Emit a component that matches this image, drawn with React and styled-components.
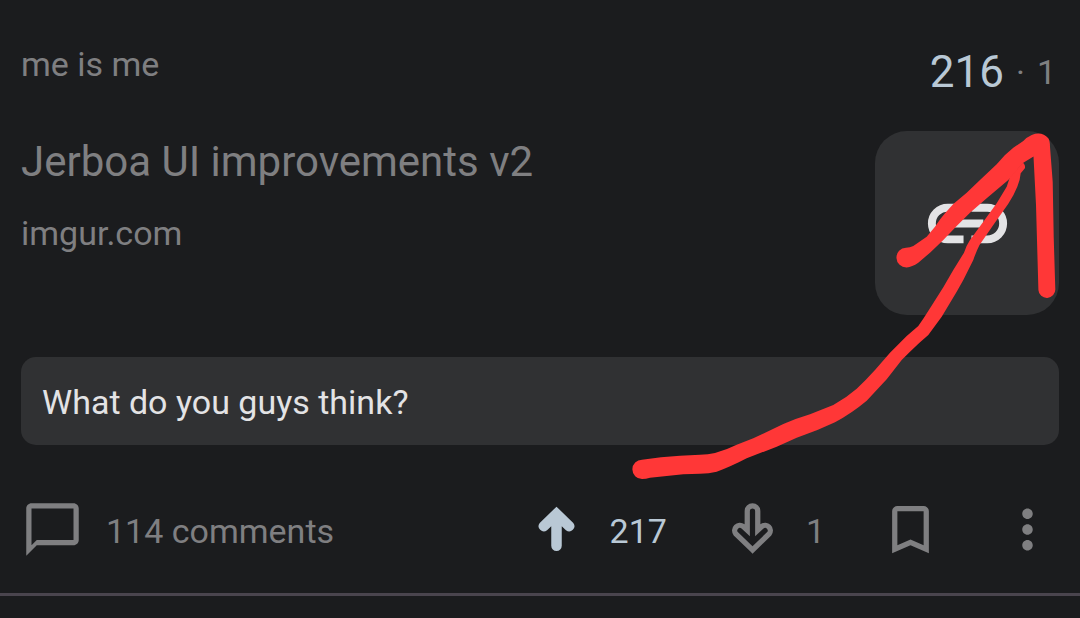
import React from "react";
import styled, { createGlobalStyle } from "styled-components";

const color = {
  page: "#1b1c1e",
  surface: "#303133",
  muted: "#7f7f81",
  text: "#e3e3e5",
  accent: "#b9c8d5",
  divider: "#4a454e",
  marker: "#ff3737",
};

const GlobalStyle = createGlobalStyle`
  *, *::before, *::after { box-sizing: border-box; }
  body {
    margin: 0;
    background: ${color.page};
    color: ${color.muted};
    font-family: Roboto, "Liberation Sans", sans-serif;
    font-size: 34px;
    line-height: 40px;
  }
`;

const Post = styled.article`
  position: relative;
  padding: 44px 21px 32px;
  border-bottom: 3px solid ${color.divider};
`;

const Header = styled.header`
  display: flex;
  justify-content: space-between;
  align-items: flex-start;
`;

const Score = styled.div`
  display: flex;
  align-items: center;
  gap: 12px;
  padding-right: 3px;
  line-height: 56px;
`;

const Total = styled.span`
  font-size: 44px;
  color: ${color.accent};
`;

const Main = styled.div`
  display: flex;
  justify-content: space-between;
  margin-top: 31px;
`;

const Heading = styled.div`
  display: flex;
  flex-direction: column;
  align-items: flex-start;
  gap: 25px;
  padding-top: 5px;
`;

const Title = styled.h1`
  margin: 0;
  font-size: 42px;
  font-weight: 400;
  line-height: 52px;
`;

const PlainLink = styled.a`
  color: inherit;
  text-decoration: none;
`;

const Thumbnail = styled.a`
  display: flex;
  align-items: center;
  justify-content: center;
  flex: none;
  width: 184px;
  height: 184px;
  border-radius: 32px;
  background: ${color.surface};
  color: ${color.text};
`;

const Body = styled.p`
  margin: 42px 0 0;
  padding: 25px 21px 23px;
  border-radius: 15px;
  background: ${color.surface};
  color: ${color.text};
`;

const Actions = styled.footer`
  display: flex;
  justify-content: space-between;
  margin-top: 53px;
`;

const ActionGroup = styled.div`
  display: flex;
  gap: 54px;
`;

const ActionButton = styled.button`
  display: flex;
  align-items: center;
  gap: 22px;
  padding: 0;
  border: 0;
  background: none;
  color: ${(p) => (p.$active ? color.accent : "inherit")};
  font: inherit;
  cursor: pointer;
`;

const ActionLabel = styled.span`
  padding-top: 2px;
`;

const Svg = styled.svg`
  display: block;
  flex: none;
  width: ${(p) => p.$size}px;
  height: ${(p) => p.$size}px;
`;

const Marker = styled.svg`
  position: absolute;
  top: 120px;
  right: 0;
  width: 460px;
  height: 370px;
  pointer-events: none;
`;

function Icon({ size = 63, children }) {
  return (
    <Svg $size={size} viewBox="0 0 24 24" fill="currentColor" aria-hidden="true">
      {children}
    </Svg>
  );
}

export default function App() {
  return (
    <>
      <GlobalStyle />
      <Post>
        <Header>
          <PlainLink href="#author">me is me</PlainLink>
          <Score>
            <Total>216</Total>
            <span>·</span>
            <span>1</span>
          </Score>
        </Header>

        <Main>
          <Heading>
            <Title>Jerboa UI improvements v2</Title>
            <PlainLink href="#source">imgur.com</PlainLink>
          </Heading>
          <Thumbnail href="#link" aria-label="Open link">
            <Icon size={95}>
              <path
                d="M11 8H7a4 4 0 0 0 0 8h4M13 8h4a4 4 0 0 1 0 8h-4M8 12h8"
                fill="none"
                stroke="currentColor"
                strokeWidth="2"
              />
            </Icon>
          </Thumbnail>
        </Main>

        <Body>What do you guys think?</Body>

        <Actions>
          <ActionButton type="button">
            <Icon>
              <path d="M20 2H4c-1.1 0-2 .9-2 2v18l4-4h14c1.1 0 2-.9 2-2V4c0-1.1-.9-2-2-2zm0 14H6l-2 2V4h16v12z" />
            </Icon>
            <ActionLabel>114 comments</ActionLabel>
          </ActionButton>
          <ActionGroup>
            <ActionButton type="button" $active aria-label="Upvote, 217">
              <Icon>
                <path d="M12 3.3 18.4 9.5A2 2 0 0 1 15.6 12.3L14 10.8V18.2A2 2 0 0 1 10 18.2V10.8L8.4 12.3A2 2 0 0 1 5.6 9.5Z" />
              </Icon>
              <ActionLabel>217</ActionLabel>
            </ActionButton>
            <ActionButton type="button" aria-label="Downvote, 1">
              <Icon>
                <path
                  d="M12 19.8 5.6 13.6A2 2 0 0 1 8.4 10.8L10 12.3V5A2 2 0 0 1 14 5V12.3L15.6 10.8A2 2 0 0 1 18.4 13.6Z"
                  fill="none"
                  stroke="currentColor"
                  strokeWidth="2"
                />
              </Icon>
              <ActionLabel>1</ActionLabel>
            </ActionButton>
            <ActionButton type="button" aria-label="Save">
              <Icon>
                <path d="M17 3H7c-1.1 0-2 .9-2 2v16l7-3 7 3V5c0-1.1-.9-2-2-2zm0 15l-5-2.18L7 18V5h10v13z" />
              </Icon>
            </ActionButton>
            <ActionButton type="button" aria-label="More options">
              <Icon>
                <path d="M12 8c1.1 0 2-.9 2-2s-.9-2-2-2-2 .9-2 2 .9 2 2 2zm0 2c-1.1 0-2 .9-2 2s.9 2 2 2 2-.9 2-2-.9-2-2-2zm0 6c-1.1 0-2 .9-2 2s.9 2 2 2 2-.9 2-2-.9-2-2-2z" />
              </Icon>
            </ActionButton>
          </ActionGroup>
        </Actions>

        {/* Hand-drawn arrow pointing at the score */}
        <Marker viewBox="620 120 460 370" fill={color.marker} aria-hidden="true">
          <path d="M642 459.7Q661 456.5 680 455.7L700 454.7Q708 454.5 715 453Q726 450 736.7 444.7L753.3 438.3L783.3 424Q796 418.5 810 414.3L833.3 405Q846 398 856.7 388.7Q866 380 875 370L890 352.7L906.7 336L918.3 326Q924 318 930 308.3L943.3 287.3L953.3 270L964 252.7Q966 246 970 240L983.3 221.7L996.7 203.3L1006.7 186.7L1010 176.7L1023 162.5Q1026 166 1024.7 168.5L1020.7 173.3Q1020 181 1017.3 186.7Q1014 195 1008.3 203.8L993.3 225L979.5 245Q976 252 973.3 260L963.3 280L956.7 291.7L941.7 316.7L928.3 335Q920 342 910 351.7L901.7 360L886.7 379.3L866.7 400.7Q852 413 835 422.3Q817 431 796.7 437.7L776.7 446.7L746.7 458.3Q730 467 716.7 471.7Q709 473.7 700 473.7L683.3 474.3L650 477.7Q646 479 642 479A9.6 9.6 0 0 1 642 459.7Z" />
          <path d="M906 247.7Q910 247.5 913.3 246L926.7 236.7L935 226.7Q940 219 945 213.3L953.3 204L966.7 192.7L980 180L996.7 164.3L1005 155L1013.3 147.7L1023.3 141Q1027 137 1031.7 135Q1042 131 1048.3 138.3Q1050 141 1050 146.7L1052.7 181.7L1053.7 236.7L1055.3 289A8.4 8.4 0 0 1 1038.4 290L1036 205L1033.5 156.5L1023.3 162.7L1008.3 180L986.7 198.3L970 212.7L956.7 226L943.3 240L930 252.7L918.3 262.7Q912 267 906.7 267.5A9.9 9.9 0 0 1 906 247.7Z" />
        </Marker>
      </Post>
    </>
  );
}
